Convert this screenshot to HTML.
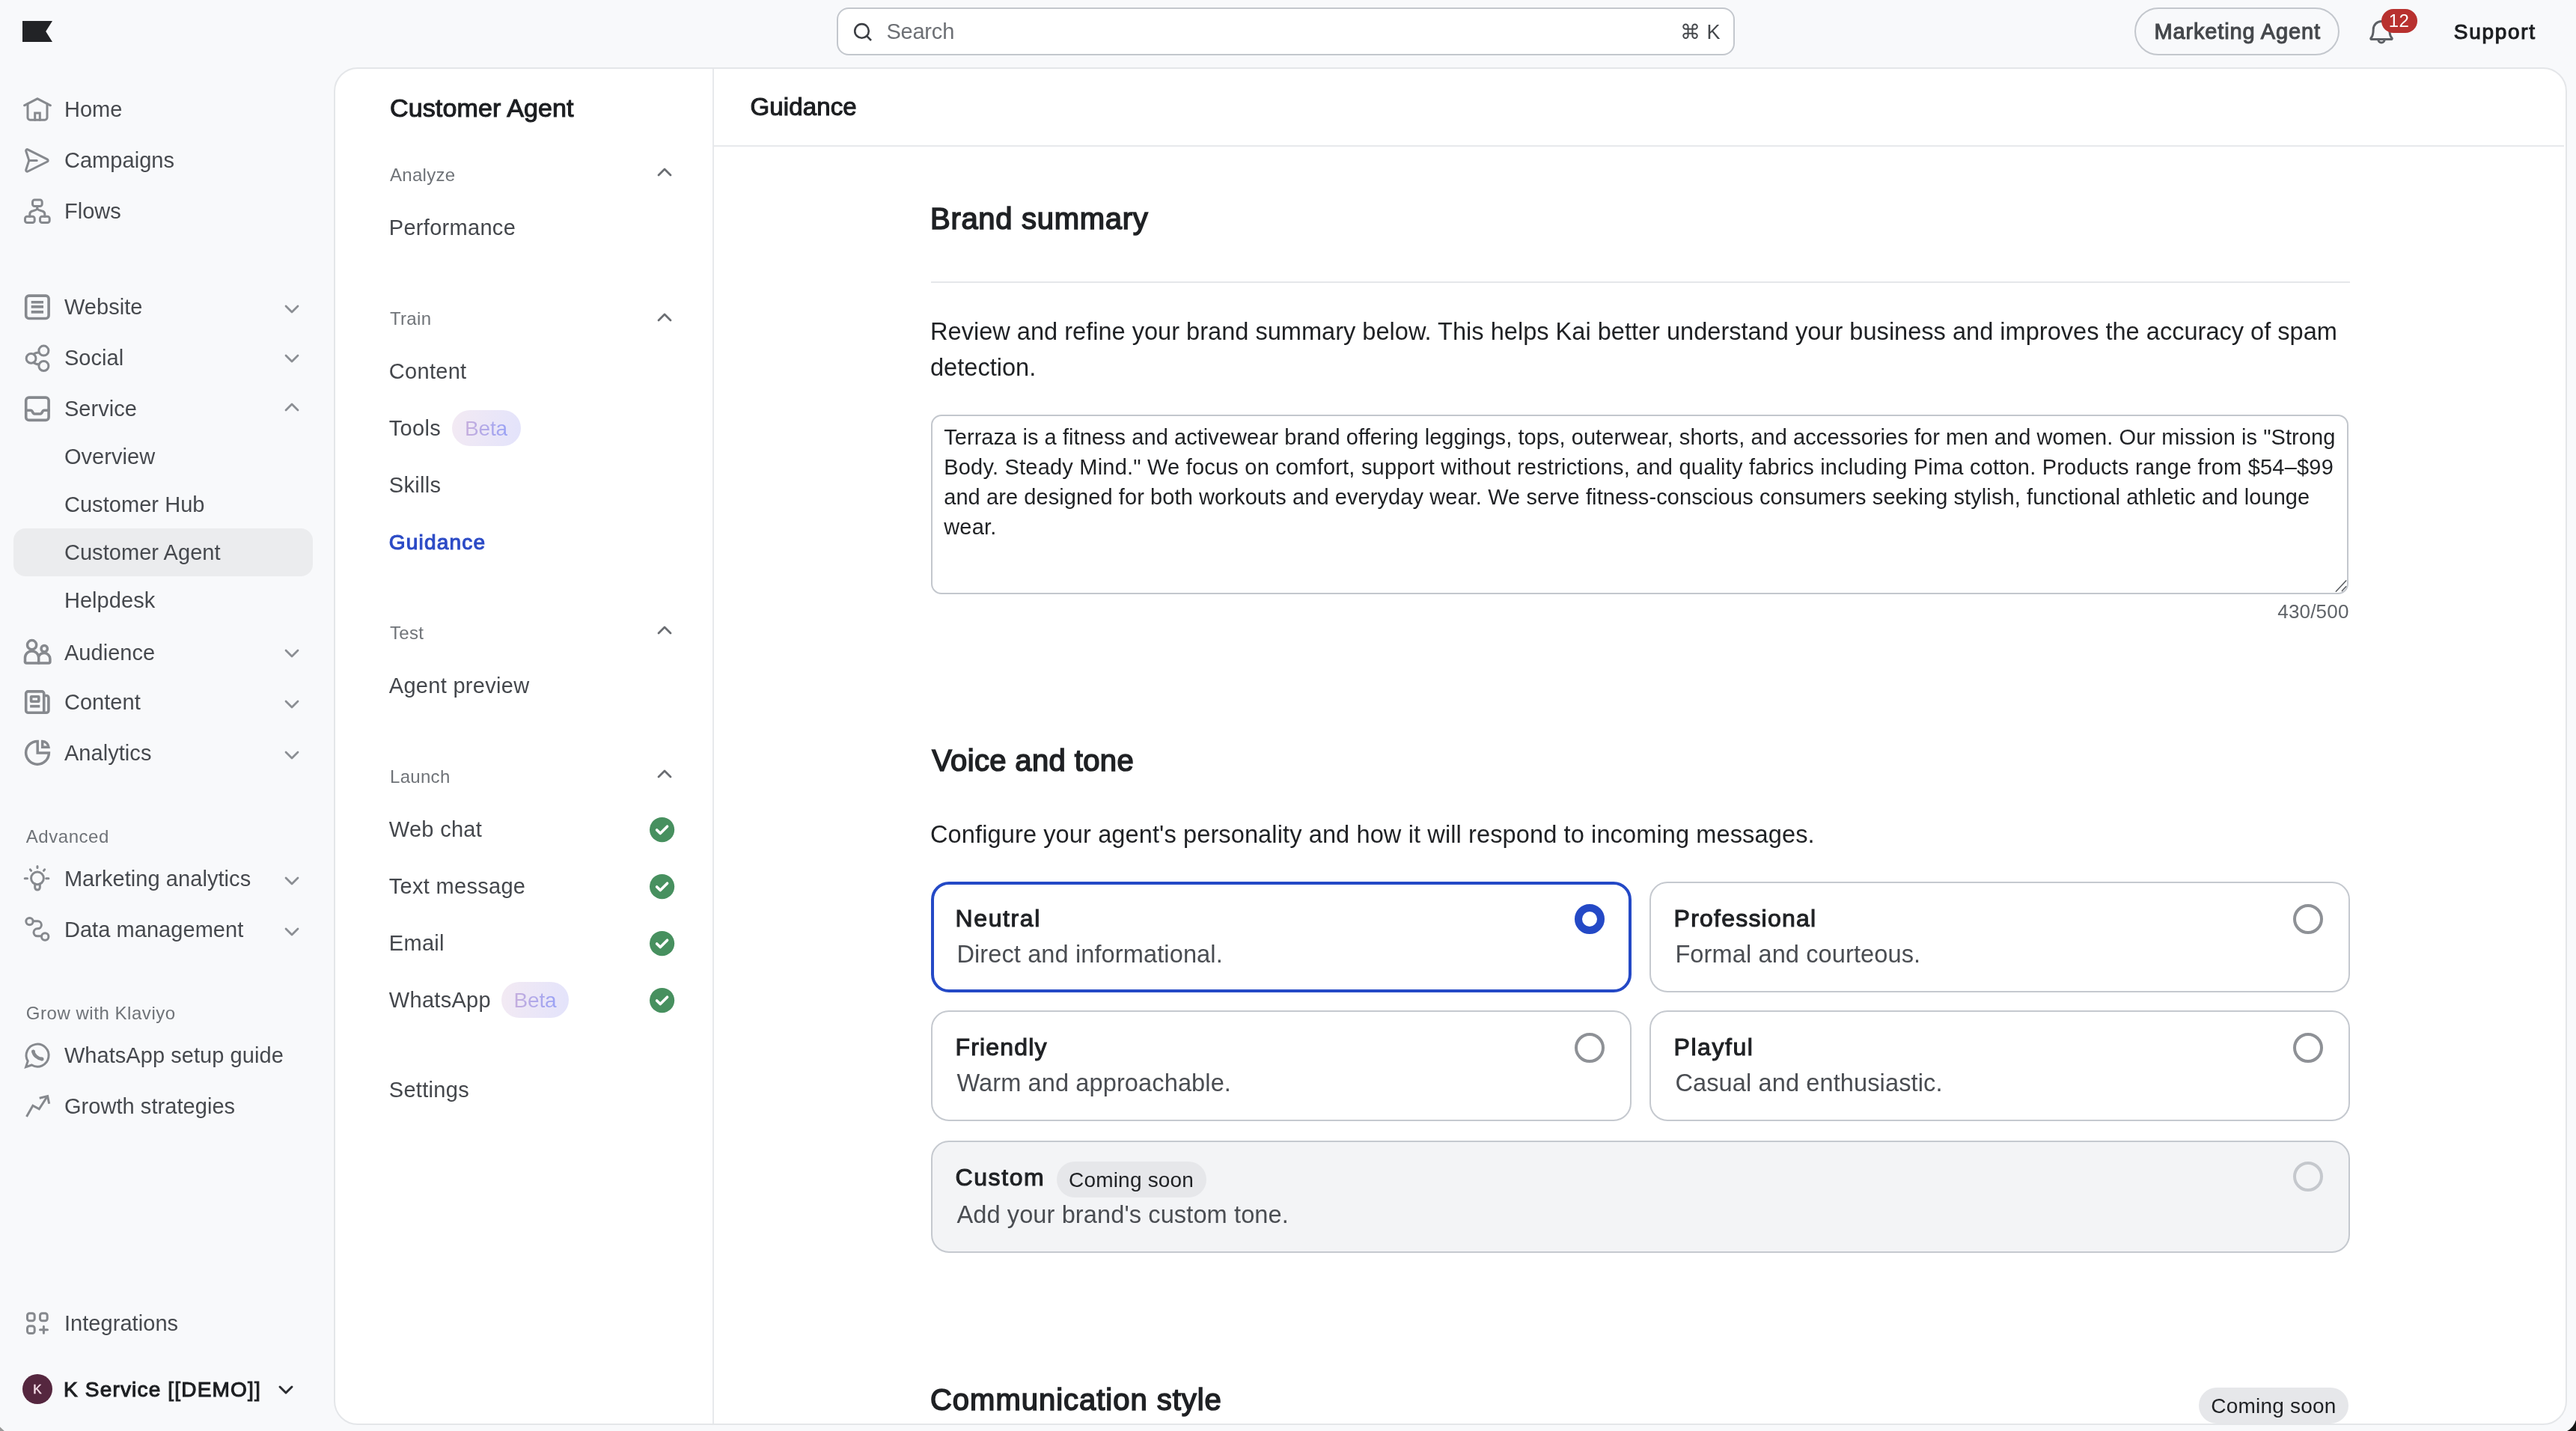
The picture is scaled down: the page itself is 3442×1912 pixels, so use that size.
<!DOCTYPE html>
<html><head><meta charset="utf-8"><title>Guidance</title>
<style>
html,body{margin:0;padding:0;width:3442px;height:1912px;overflow:hidden;background:#f8f9fb}
#root{position:absolute;left:0;top:0;width:1721px;height:956px;transform:scale(2);transform-origin:0 0;background:#f8f9fb;overflow:hidden;
  font-family:"Liberation Sans",sans-serif;}
.t{position:absolute;white-space:nowrap}
.ic{position:absolute;overflow:visible}
.beta{position:absolute;height:24px;border-radius:12px;background:linear-gradient(100deg,#f3eaf3,#e3e3fb);font-size:14px;line-height:24px;text-align:center;letter-spacing:-0.1px}
.beta span{background:linear-gradient(90deg,#c6aedd,#9aa2f5);-webkit-background-clip:text;background-clip:text;color:transparent}
.pill{position:absolute;height:24px;border-radius:12px;background:#e6e7ea;color:#1f2124;font-size:14px;line-height:24px;text-align:center;letter-spacing:0.1px}
</style></head>
<body><div id="root">
<svg class="ic" style="left:15px;top:14px;width:20px;height:14px" viewBox="0 0 20 14"><path d="M0 0 H20 L15.6 7 L20 14 H0 Z" fill="#222326"/></svg>
<div style="position:absolute;left:9px;top:353px;width:200px;height:32px;border-radius:8px;background:#ebecee"></div>
<svg class="ic" style="left:15px;top:63.099999999999994px;width:20px;height:20px" viewBox="0 0 20 20" fill="none" stroke="#86898e" stroke-width="1.5" stroke-linecap="round" stroke-linejoin="round"><path d="M1.3 7.4 L10 2.9 L18.7 7.4"/><path d="M3.5 6.3 V15.5 a1.6 1.6 0 0 0 1.6 1.6 H14.9 a1.6 1.6 0 0 0 1.6 -1.6 V6.3"/><path d="M8.35 17.1 V12.5 H11.65 V17.1" stroke-linejoin="miter"/></svg>
<div class="t" style="left:42.95px;top:63.28px;font-size:14.5px;line-height:20px;color:#46494e;font-weight:400;letter-spacing:0.03px;">Home</div>
<svg class="ic" style="left:15px;top:96.8px;width:20px;height:20px" viewBox="0 0 20 20" fill="none" stroke="#86898e" stroke-width="1.5" stroke-linecap="round" stroke-linejoin="round"><path d="M3.6 2.9 L16.6 9.4 a0.9 0.9 0 0 1 0 1.6 L3.6 17.5 a0.9 0.9 0 0 1 -1.25 -1.0 L4.4 10.2 L2.35 3.9 a0.9 0.9 0 0 1 1.25 -1.0 Z"/><path d="M4.4 10.2 H9.6"/></svg>
<div class="t" style="left:42.95px;top:96.98px;font-size:14.5px;line-height:20px;color:#46494e;font-weight:400;letter-spacing:0.03px;">Campaigns</div>
<svg class="ic" style="left:15px;top:130.8px;width:20px;height:20px" viewBox="0 0 20 20" fill="none" stroke="#86898e" stroke-width="1.5" stroke-linecap="round" stroke-linejoin="round"><rect x="6.75" y="2.55" width="6.35" height="4.2" rx="1.4"/><rect x="1.75" y="13.6" width="6.35" height="4.15" rx="1.4"/><rect x="11.75" y="13.6" width="6.35" height="4.15" rx="1.4"/><path d="M9.9 6.75 V8.3 C9.9 9.3 8.6 9.5 7 9.9 C5.6 10.2 4.9 10.9 4.9 12 V13.6"/><path d="M9.9 8.3 C9.9 9.3 11.2 9.5 12.8 9.9 C14.2 10.2 14.9 10.9 14.9 12 V13.6"/></svg>
<div class="t" style="left:42.95px;top:130.98px;font-size:14.5px;line-height:20px;color:#46494e;font-weight:400;letter-spacing:0.03px;">Flows</div>
<svg class="ic" style="left:15px;top:194.8px;width:20px;height:20px" viewBox="0 0 20 20" fill="none" stroke="#86898e" stroke-width="1.8" stroke-linecap="round" stroke-linejoin="round"><rect x="2.35" y="2.55" width="15.2" height="15.2" rx="2"/><path d="M5.85 6.85 H14 M5.85 9.95 H14 M5.85 13.45 H14" stroke-linecap="butt"/></svg>
<div class="t" style="left:42.95px;top:194.98px;font-size:14.5px;line-height:20px;color:#46494e;font-weight:400;letter-spacing:0.03px;">Website</div>
<svg class="ic" style="left:190px;top:201.5px;width:10px;height:10px" viewBox="0 0 10 10" fill="none" stroke="#8b8e93" stroke-width="1.4" stroke-linecap="round" stroke-linejoin="round"><path d="M1 2.5 L5 6.5 L9 2.5"/></svg>
<svg class="ic" style="left:15px;top:228.60000000000002px;width:20px;height:20px" viewBox="0 0 20 20" fill="none" stroke="#86898e" stroke-width="1.5" stroke-linecap="round" stroke-linejoin="round"><circle cx="14.2" cy="5.3" r="3.25"/><circle cx="5.78" cy="10.45" r="3.2"/><circle cx="14.2" cy="15.5" r="3.25"/><path d="M7.6 7.6 Q8.6 6.6 10.9 6.5 M7.6 13.3 Q8.6 14.3 10.9 14.4"/></svg>
<div class="t" style="left:42.95px;top:228.78px;font-size:14.5px;line-height:20px;color:#46494e;font-weight:400;letter-spacing:0.03px;">Social</div>
<svg class="ic" style="left:190px;top:235.3px;width:10px;height:10px" viewBox="0 0 10 10" fill="none" stroke="#8b8e93" stroke-width="1.4" stroke-linecap="round" stroke-linejoin="round"><path d="M1 2.5 L5 6.5 L9 2.5"/></svg>
<svg class="ic" style="left:15px;top:262.7px;width:20px;height:20px" viewBox="0 0 20 20" fill="none" stroke="#86898e" stroke-width="1.8" stroke-linecap="round" stroke-linejoin="round"><rect x="2.35" y="2.55" width="15.2" height="15.15" rx="2"/><path d="M2.35 11.1 H5.6 a0.8 0.8 0 0 1 0.7 0.4 L7.3 13.1 a0.8 0.8 0 0 0 0.7 0.4 H12 a0.8 0.8 0 0 0 0.7 -0.4 L13.7 11.5 a0.8 0.8 0 0 1 0.7 -0.4 H17.55"/></svg>
<div class="t" style="left:42.95px;top:262.88px;font-size:14.5px;line-height:20px;color:#46494e;font-weight:400;letter-spacing:0.03px;">Service</div>
<svg class="ic" style="left:190px;top:267.4px;width:10px;height:10px" viewBox="0 0 10 10" fill="none" stroke="#8b8e93" stroke-width="1.4" stroke-linecap="round" stroke-linejoin="round"><path d="M1 7 L5 3 L9 7"/></svg>
<div class="t" style="left:42.95px;top:295.38px;font-size:14.5px;line-height:20px;color:#46494e;font-weight:400;letter-spacing:0.03px;">Overview</div>
<div class="t" style="left:42.95px;top:327.28px;font-size:14.5px;line-height:20px;color:#46494e;font-weight:400;letter-spacing:0.03px;">Customer Hub</div>
<div class="t" style="left:42.95px;top:359.48px;font-size:14.5px;line-height:20px;color:#46494e;font-weight:400;letter-spacing:0.03px;">Customer Agent</div>
<div class="t" style="left:42.95px;top:391.38px;font-size:14.5px;line-height:20px;color:#46494e;font-weight:400;letter-spacing:0.03px;">Helpdesk</div>
<svg class="ic" style="left:15px;top:425.5px;width:20px;height:20px" viewBox="0 0 20 20" fill="none" stroke="#86898e" stroke-width="1.75" stroke-linecap="round" stroke-linejoin="round"><circle cx="6.3" cy="4.85" r="3.05"/><circle cx="14.6" cy="7.35" r="2.1"/><path d="M1.75 16.1 V13.5 A4.55 4.55 0 0 1 10.85 13.5 V17"/><path d="M10.85 12.4 C11.6 11.2 13 10.3 14.6 10.3 C16.8 10.3 18.45 12.1 18.45 14.2 V16 a1 1 0 0 1 -1 1 H2.75 a1 1 0 0 1 -1 -1"/></svg>
<div class="t" style="left:42.95px;top:425.68px;font-size:14.5px;line-height:20px;color:#46494e;font-weight:400;letter-spacing:0.03px;">Audience</div>
<svg class="ic" style="left:190px;top:432.2px;width:10px;height:10px" viewBox="0 0 10 10" fill="none" stroke="#8b8e93" stroke-width="1.4" stroke-linecap="round" stroke-linejoin="round"><path d="M1 2.5 L5 6.5 L9 2.5"/></svg>
<svg class="ic" style="left:15px;top:459.3px;width:20px;height:20px" viewBox="0 0 20 20" fill="none" stroke="#86898e" stroke-width="1.8" stroke-linecap="round" stroke-linejoin="round"><path d="M14.35 5.75 V4.3 a1.35 1.35 0 0 0 -1.35 -1.35 H3.7 a1.35 1.35 0 0 0 -1.35 1.35 V15.6 a1.55 1.55 0 0 0 1.55 1.55 H15.9 a1.55 1.55 0 0 0 1.55 -1.55 V7.1 a1.35 1.35 0 0 0 -1.35 -1.35 H14.35 V17.15"/><rect x="5.8" y="6.35" width="5.1" height="3.25" rx="0.2" stroke-linejoin="miter"/><path d="M5.06 12.85 H11.65" stroke-linecap="butt"/></svg>
<div class="t" style="left:42.95px;top:459.48px;font-size:14.5px;line-height:20px;color:#46494e;font-weight:400;letter-spacing:0.03px;">Content</div>
<svg class="ic" style="left:190px;top:466.0px;width:10px;height:10px" viewBox="0 0 10 10" fill="none" stroke="#8b8e93" stroke-width="1.4" stroke-linecap="round" stroke-linejoin="round"><path d="M1 2.5 L5 6.5 L9 2.5"/></svg>
<svg class="ic" style="left:15px;top:493.3px;width:20px;height:20px" viewBox="0 0 20 20" fill="none" stroke="#86898e" stroke-width="1.75" stroke-linecap="round" stroke-linejoin="round"><path d="M10.1 2.2 A7.7 7.7 0 1 0 17.7 10 H10.1 Z" stroke-linejoin="miter"/><path d="M13.35 2.25 V6.1 H17.45 A4.4 4.4 0 0 0 13.35 2.25 Z" stroke-linejoin="miter"/></svg>
<div class="t" style="left:42.95px;top:493.48px;font-size:14.5px;line-height:20px;color:#46494e;font-weight:400;letter-spacing:0.03px;">Analytics</div>
<svg class="ic" style="left:190px;top:500.0px;width:10px;height:10px" viewBox="0 0 10 10" fill="none" stroke="#8b8e93" stroke-width="1.4" stroke-linecap="round" stroke-linejoin="round"><path d="M1 2.5 L5 6.5 L9 2.5"/></svg>
<div class="t" style="left:17.4px;top:551.14px;font-size:12px;line-height:16px;color:#6f7378;font-weight:400;letter-spacing:0.27px;">Advanced</div>
<svg class="ic" style="left:15px;top:577.0999999999999px;width:20px;height:20px" viewBox="0 0 20 20" fill="none" stroke="#86898e" stroke-width="1.5" stroke-linecap="round" stroke-linejoin="round"><circle cx="9.98" cy="9.7" r="4.2"/><path d="M8.35 13.4 V15.9 a1.65 1.65 0 0 0 3.3 0 V13.4"/><path d="M9.98 1.75 V2.8 M5.2 3.9 L5.8 4.7 M14.8 3.9 L14.2 4.7 M1.6 9.85 H3.25 M15.85 9.85 H17.45"/></svg>
<div class="t" style="left:42.95px;top:577.28px;font-size:14.5px;line-height:20px;color:#46494e;font-weight:400;letter-spacing:0.03px;">Marketing analytics</div>
<svg class="ic" style="left:190px;top:583.8px;width:10px;height:10px" viewBox="0 0 10 10" fill="none" stroke="#8b8e93" stroke-width="1.4" stroke-linecap="round" stroke-linejoin="round"><path d="M1 2.5 L5 6.5 L9 2.5"/></svg>
<svg class="ic" style="left:15px;top:611.1999999999999px;width:20px;height:20px" viewBox="0 0 20 20" fill="none" stroke="#86898e" stroke-width="1.5" stroke-linecap="round" stroke-linejoin="round"><circle cx="4.75" cy="4.55" r="2.35"/><circle cx="15.1" cy="14.75" r="2.35"/><path d="M7.1 4.4 H10.2 A2.5 2.5 0 0 1 10.2 9.4 H10 A2.5 2.5 0 0 0 10 14.4 H12.75"/></svg>
<div class="t" style="left:42.95px;top:611.38px;font-size:14.5px;line-height:20px;color:#46494e;font-weight:400;letter-spacing:0.03px;">Data management</div>
<svg class="ic" style="left:190px;top:617.9px;width:10px;height:10px" viewBox="0 0 10 10" fill="none" stroke="#8b8e93" stroke-width="1.4" stroke-linecap="round" stroke-linejoin="round"><path d="M1 2.5 L5 6.5 L9 2.5"/></svg>
<div class="t" style="left:17.4px;top:669.44px;font-size:12px;line-height:16px;color:#6f7378;font-weight:400;letter-spacing:0.27px;">Grow with Klaviyo</div>
<svg class="ic" style="left:15px;top:694.8px;width:20px;height:20px" viewBox="0 0 20 20" fill="none" stroke="#86898e" stroke-width="1.5" stroke-linecap="round" stroke-linejoin="round"><path d="M2.3 17.8 L3.6 13.9 A7.5 7.5 0 1 1 6.2 16.5 Z" stroke-linejoin="miter"/><path d="M7.2 7.4 C7.4 9.8 9.9 12.2 12.9 12.5" stroke-width="2.2"/><circle cx="7.25" cy="7.55" r="1.2" fill="#86898e" stroke="none"/><circle cx="13" cy="12.45" r="1.25" fill="#86898e" stroke="none"/></svg>
<div class="t" style="left:42.95px;top:694.98px;font-size:14.5px;line-height:20px;color:#46494e;font-weight:400;letter-spacing:0.03px;">WhatsApp setup guide</div>
<svg class="ic" style="left:15px;top:728.8px;width:20px;height:20px" viewBox="0 0 20 20" fill="none" stroke="#86898e" stroke-width="1.5" stroke-linecap="round" stroke-linejoin="round"><path d="M2.75 16.95 L6.95 9.6 L11.15 11.9 L16.5 3.6" stroke-linecap="butt" stroke-linejoin="miter"/><path d="M11.35 4.6 L16.8 3.3 L17.85 8.35" stroke-linecap="butt" stroke-linejoin="miter"/></svg>
<div class="t" style="left:42.95px;top:728.98px;font-size:14.5px;line-height:20px;color:#46494e;font-weight:400;letter-spacing:0.03px;">Growth strategies</div>
<svg class="ic" style="left:15px;top:873.8px;width:20px;height:20px" viewBox="0 0 20 20" fill="none" stroke="#86898e" stroke-width="1.5" stroke-linecap="round" stroke-linejoin="round"><rect x="3.25" y="3.4" width="4.85" height="5" rx="1.5"/><rect x="11.75" y="3.4" width="4.85" height="5" rx="1.5"/><rect x="3.25" y="11.85" width="4.85" height="4.95" rx="1.5"/><path d="M14.2 12.1 V16.6 M11.75 14.35 H16.75"/></svg>
<div class="t" style="left:42.95px;top:873.98px;font-size:14.5px;line-height:20px;color:#46494e;font-weight:400;letter-spacing:0.03px;">Integrations</div>
<div style="position:absolute;left:15px;top:918px;width:20px;height:20px;border-radius:50%;background:#55273f;color:#f3dbe6;font-size:8.5px;line-height:20.5px;text-align:center;-webkit-text-stroke:0.2px #f3dbe6">K</div>
<div class="t" style="left:42.5px;top:918.35px;font-size:14px;line-height:20px;color:#1c1e21;font-weight:400;letter-spacing:0.588px;-webkit-text-stroke:0.55px #1c1e21;">K Service [[DEMO]]</div>
<svg class="ic" style="left:185.5px;top:924px;width:10px;height:10px" viewBox="0 0 10 10" fill="none" stroke="#2a2c30" stroke-width="1.5" stroke-linecap="round" stroke-linejoin="round"><path d="M1 2.5 L5 6.5 L9 2.5"/></svg>
<div style="position:absolute;left:559.3px;top:5.3px;width:599.4px;height:31.3px;box-sizing:border-box;border:1px solid #c3c7cd;border-radius:8px;background:#fff"></div>
<svg class="ic" style="left:569.5px;top:14.5px;width:13px;height:13px" viewBox="0 0 13 13" fill="none" stroke="#3c3f44" stroke-width="1.3" stroke-linecap="round" stroke-linejoin="round"><circle cx="5.75" cy="5.7" r="4.65"/><path d="M9.1 9.1 L12 12" stroke-linecap="butt"/></svg>
<div class="t" style="left:592.2px;top:11.43px;font-size:14.5px;line-height:20px;color:#6d7075;font-weight:400;letter-spacing:-0.1px;">Search</div>
<div class="t" style="right:571.7px;top:11.92px;font-size:13.5px;line-height:20px;color:#45484c;font-weight:400;letter-spacing:0px;">&#8984; K</div>
<div style="position:absolute;left:1425.8px;top:5.2px;width:136.8px;height:31.6px;box-sizing:border-box;border:1px solid #c3c7cd;border-radius:16px"></div>
<div class="t" style="left:1439.2px;top:10.88px;font-size:14.5px;line-height:20px;color:#45484c;font-weight:400;letter-spacing:0.429px;-webkit-text-stroke:0.55px #45484c;">Marketing Agent</div>
<svg class="ic" style="left:1582px;top:12px;width:18px;height:18px" viewBox="0 0 18 18" fill="none" stroke="#5d6065" stroke-width="1.5" stroke-linecap="round" stroke-linejoin="round"><path d="M2 13.4 C3.4 12 3.6 10.6 3.6 7.6 A5.4 5.4 0 0 1 14.4 7.6 C14.4 10.6 14.6 12 16 13.4 a0.5 0.5 0 0 1 -0.35 0.85 H2.35 a0.5 0.5 0 0 1 -0.35 -0.85 Z"/><path d="M6.9 14.4 a2.1 2.1 0 0 0 4.2 0"/></svg>
<div style="position:absolute;left:1591px;top:6px;width:23.6px;height:16px;border-radius:8px;background:#b8312f;color:#fff;font-size:12px;line-height:16px;text-align:center;letter-spacing:0.3px">12</div>
<div class="t" style="left:1639.4px;top:11.45px;font-size:14px;line-height:20px;color:#1c1e21;font-weight:400;letter-spacing:0.849px;-webkit-text-stroke:0.55px #1c1e21;">Support</div>
<div style="position:absolute;left:223px;top:45px;width:1491.5px;height:906.5px;box-sizing:border-box;border:1px solid #e4e6e9;border-radius:16px;background:#fff;overflow:hidden" id="card"></div>
<div style="position:absolute;left:476px;top:46px;width:1px;height:905px;background:#e7e9ec"></div>
<div style="position:absolute;left:477px;top:97px;width:1236px;height:1px;background:#e7e9ec"></div>
<div class="t" style="left:260.5px;top:60.81px;font-size:17px;line-height:24px;color:#1c1e21;font-weight:400;letter-spacing:0.066px;-webkit-text-stroke:0.55px #1c1e21;">Customer Agent</div>
<div class="t" style="left:260.5px;top:108.84px;font-size:12px;line-height:16px;color:#6f7378;font-weight:400;letter-spacing:0.15px;">Analyze</div>
<svg class="ic" style="left:439px;top:110.4px;width:10px;height:10px" viewBox="0 0 10 10" fill="none" stroke="#6a6d72" stroke-width="1.4" stroke-linecap="round" stroke-linejoin="round"><path d="M1 7 L5 3 L9 7"/></svg>
<div class="t" style="left:259.9px;top:142.18px;font-size:14.5px;line-height:20px;color:#44474c;font-weight:400;letter-spacing:0.15px;">Performance</div>
<div class="t" style="left:260.5px;top:204.94px;font-size:12px;line-height:16px;color:#6f7378;font-weight:400;letter-spacing:0.15px;">Train</div>
<svg class="ic" style="left:439px;top:206.5px;width:10px;height:10px" viewBox="0 0 10 10" fill="none" stroke="#6a6d72" stroke-width="1.4" stroke-linecap="round" stroke-linejoin="round"><path d="M1 7 L5 3 L9 7"/></svg>
<div class="t" style="left:259.9px;top:238.48px;font-size:14.5px;line-height:20px;color:#44474c;font-weight:400;letter-spacing:0.15px;">Content</div>
<div class="t" style="left:259.9px;top:276.38px;font-size:14.5px;line-height:20px;color:#44474c;font-weight:400;letter-spacing:0.15px;">Tools</div>
<div class="beta" style="left:302px;top:274px;width:45.5px;"><span>Beta</span></div>
<div class="t" style="left:259.9px;top:313.98px;font-size:14.5px;line-height:20px;color:#44474c;font-weight:400;letter-spacing:0.15px;">Skills</div>
<div class="t" style="left:259.9px;top:352.35px;font-size:14px;line-height:20px;color:#2c4bc6;font-weight:400;letter-spacing:0.6px;-webkit-text-stroke:0.55px #2c4bc6;">Guidance</div>
<div class="t" style="left:260.5px;top:414.74px;font-size:12px;line-height:16px;color:#6f7378;font-weight:400;letter-spacing:0.15px;">Test</div>
<svg class="ic" style="left:439px;top:416.4px;width:10px;height:10px" viewBox="0 0 10 10" fill="none" stroke="#6a6d72" stroke-width="1.4" stroke-linecap="round" stroke-linejoin="round"><path d="M1 7 L5 3 L9 7"/></svg>
<div class="t" style="left:259.9px;top:448.28px;font-size:14.5px;line-height:20px;color:#44474c;font-weight:400;letter-spacing:0.15px;">Agent preview</div>
<div class="t" style="left:260.5px;top:510.74px;font-size:12px;line-height:16px;color:#6f7378;font-weight:400;letter-spacing:0.15px;">Launch</div>
<svg class="ic" style="left:439px;top:512.4px;width:10px;height:10px" viewBox="0 0 10 10" fill="none" stroke="#6a6d72" stroke-width="1.4" stroke-linecap="round" stroke-linejoin="round"><path d="M1 7 L5 3 L9 7"/></svg>
<div class="t" style="left:259.9px;top:544.28px;font-size:14.5px;line-height:20px;color:#44474c;font-weight:400;letter-spacing:0.15px;">Web chat</div>
<svg class="ic" style="left:433.6px;top:545.90px;width:16.6px;height:16.6px" viewBox="0 0 20 20"><circle cx="10" cy="10" r="10" fill="#47905f"/><path d="M5.8 10.2 L8.6 13 L14.2 7.4" stroke="#fff" stroke-width="2.2" fill="none" stroke-linecap="round" stroke-linejoin="round"/></svg>
<div class="t" style="left:259.9px;top:581.98px;font-size:14.5px;line-height:20px;color:#44474c;font-weight:400;letter-spacing:0.15px;">Text message</div>
<svg class="ic" style="left:433.6px;top:583.60px;width:16.6px;height:16.6px" viewBox="0 0 20 20"><circle cx="10" cy="10" r="10" fill="#47905f"/><path d="M5.8 10.2 L8.6 13 L14.2 7.4" stroke="#fff" stroke-width="2.2" fill="none" stroke-linecap="round" stroke-linejoin="round"/></svg>
<div class="t" style="left:259.9px;top:620.28px;font-size:14.5px;line-height:20px;color:#44474c;font-weight:400;letter-spacing:0.15px;">Email</div>
<svg class="ic" style="left:433.6px;top:621.90px;width:16.6px;height:16.6px" viewBox="0 0 20 20"><circle cx="10" cy="10" r="10" fill="#47905f"/><path d="M5.8 10.2 L8.6 13 L14.2 7.4" stroke="#fff" stroke-width="2.2" fill="none" stroke-linecap="round" stroke-linejoin="round"/></svg>
<div class="t" style="left:259.9px;top:658.38px;font-size:14.5px;line-height:20px;color:#44474c;font-weight:400;letter-spacing:0.15px;">WhatsApp</div>
<svg class="ic" style="left:433.6px;top:660.00px;width:16.6px;height:16.6px" viewBox="0 0 20 20"><circle cx="10" cy="10" r="10" fill="#47905f"/><path d="M5.8 10.2 L8.6 13 L14.2 7.4" stroke="#fff" stroke-width="2.2" fill="none" stroke-linecap="round" stroke-linejoin="round"/></svg>
<div class="beta" style="left:335px;top:656px;width:45px;"><span>Beta</span></div>
<div class="t" style="left:259.9px;top:718.38px;font-size:14.5px;line-height:20px;color:#44474c;font-weight:400;letter-spacing:0.15px;">Settings</div>
<div class="t" style="left:501.3px;top:59.48px;font-size:16.5px;line-height:24px;color:#1c1e21;font-weight:400;letter-spacing:0.056px;-webkit-text-stroke:0.55px #1c1e21;">Guidance</div>
<div class="t" style="left:621.5px;top:132.17px;font-size:20px;line-height:28px;color:#1f2124;font-weight:400;letter-spacing:0.348px;-webkit-text-stroke:0.8px #1f2124;">Brand summary</div>
<div style="position:absolute;left:621.5px;top:188px;width:948px;height:1px;background:#e5e7ea"></div>
<div class="t" style="left:621.5px;top:208.75px;font-size:16.3px;line-height:24px;color:#1f2124;font-weight:400;letter-spacing:0px;">Review and refine your brand summary below. This helps Kai better understand your business and improves the accuracy of spam</div>
<div class="t" style="left:621.5px;top:232.65px;font-size:16.3px;line-height:24px;color:#1f2124;font-weight:400;letter-spacing:0px;">detection.</div>
<div style="position:absolute;left:621.5px;top:277.3px;width:947.6px;height:119.9px;box-sizing:border-box;border:1px solid #c3c7cd;border-radius:7px;background:#fff"></div>
<div class="t" style="left:630.6px;top:282.08px;font-size:14.5px;line-height:20px;color:#1f2124;font-weight:400;letter-spacing:0.03px;">Terraza is a fitness and activewear brand offering leggings, tops, outerwear, shorts, and accessories for men and women. Our mission is "Strong</div>
<div class="t" style="left:630.6px;top:302.08px;font-size:14.5px;line-height:20px;color:#1f2124;font-weight:400;letter-spacing:0.104px;">Body. Steady Mind." We focus on comfort, support without restrictions, and quality fabrics including Pima cotton. Products range from $54&ndash;$99</div>
<div class="t" style="left:630.6px;top:322.08px;font-size:14.5px;line-height:20px;color:#1f2124;font-weight:400;letter-spacing:0.044px;">and are designed for both workouts and everyday wear. We serve fitness-conscious consumers seeking stylish, functional athletic and lounge</div>
<div class="t" style="left:630.6px;top:342.08px;font-size:14.5px;line-height:20px;color:#1f2124;font-weight:400;letter-spacing:0.1px;">wear.</div>
<svg class="ic" style="left:1556px;top:383px;width:10px;height:10px" viewBox="0 0 10 10" stroke="#56595e" stroke-width="0.75" stroke-linecap="round" fill="none"><path d="M4.65 12.1 L11.35 4.95 M8.7 11.8 L11.35 8.9"/></svg>
<div class="t" style="right:151.70000000000005px;top:401.10px;font-size:13px;line-height:16px;color:#5f6368;font-weight:400;letter-spacing:0.1px;">430/500</div>
<div class="t" style="left:622.6px;top:493.97px;font-size:20px;line-height:28px;color:#1f2124;font-weight:400;letter-spacing:0.184px;-webkit-text-stroke:0.8px #1f2124;">Voice and tone</div>
<div class="t" style="left:621.5px;top:544.75px;font-size:16.3px;line-height:24px;color:#1f2124;font-weight:400;letter-spacing:0.05px;">Configure your agent's personality and how it will respond to incoming messages.</div>
<div style="position:absolute;left:621.5px;top:589px;width:468px;height:74px;box-sizing:border-box;border:2px solid #2449c6;border-radius:12px;background:#fff"></div>
<div class="t" style="left:638.3px;top:602.36px;font-size:16px;line-height:24px;color:#1f2124;font-weight:400;letter-spacing:0.801px;-webkit-text-stroke:0.55px #1f2124;">Neutral</div>
<div class="t" style="left:639.2px;top:625.45px;font-size:16.3px;line-height:24px;color:#4a4d52;font-weight:400;letter-spacing:0.05px;">Direct and informational.</div>
<svg class="ic" style="left:1052.45px;top:603.95px;width:20px;height:20px" viewBox="0 0 20 20"><circle cx="10" cy="10" r="7.5" stroke="#2449c6" stroke-width="5" fill="#fff"/></svg>
<div style="position:absolute;left:1101.5px;top:589px;width:468px;height:74px;box-sizing:border-box;border:1px solid #c5c9cf;border-radius:12px;background:#fff"></div>
<div class="t" style="left:1118.3px;top:602.36px;font-size:16px;line-height:24px;color:#1f2124;font-weight:400;letter-spacing:0.609px;-webkit-text-stroke:0.55px #1f2124;">Professional</div>
<div class="t" style="left:1119.2px;top:625.45px;font-size:16.3px;line-height:24px;color:#4a4d52;font-weight:400;letter-spacing:0.05px;">Formal and courteous.</div>
<svg class="ic" style="left:1532.45px;top:603.95px;width:20px;height:20px" viewBox="0 0 20 20"><circle cx="10" cy="10" r="9" stroke="#8e9196" stroke-width="2" fill="none"/></svg>
<div style="position:absolute;left:621.5px;top:675px;width:468px;height:74px;box-sizing:border-box;border:1px solid #c5c9cf;border-radius:12px;background:#fff"></div>
<div class="t" style="left:638.3px;top:688.46px;font-size:16px;line-height:24px;color:#1f2124;font-weight:400;letter-spacing:0.571px;-webkit-text-stroke:0.55px #1f2124;">Friendly</div>
<div class="t" style="left:639.2px;top:711.25px;font-size:16.3px;line-height:24px;color:#4a4d52;font-weight:400;letter-spacing:0.05px;">Warm and approachable.</div>
<svg class="ic" style="left:1052.45px;top:689.95px;width:20px;height:20px" viewBox="0 0 20 20"><circle cx="10" cy="10" r="9" stroke="#8e9196" stroke-width="2" fill="none"/></svg>
<div style="position:absolute;left:1101.5px;top:675px;width:468px;height:74px;box-sizing:border-box;border:1px solid #c5c9cf;border-radius:12px;background:#fff"></div>
<div class="t" style="left:1118.3px;top:688.46px;font-size:16px;line-height:24px;color:#1f2124;font-weight:400;letter-spacing:0.768px;-webkit-text-stroke:0.55px #1f2124;">Playful</div>
<div class="t" style="left:1119.2px;top:711.25px;font-size:16.3px;line-height:24px;color:#4a4d52;font-weight:400;letter-spacing:0.05px;">Casual and enthusiastic.</div>
<svg class="ic" style="left:1532.45px;top:689.95px;width:20px;height:20px" viewBox="0 0 20 20"><circle cx="10" cy="10" r="9" stroke="#8e9196" stroke-width="2" fill="none"/></svg>
<div style="position:absolute;left:621.5px;top:761.5px;width:948px;height:75px;box-sizing:border-box;border:1px solid #c5c9cf;border-radius:12px;background:#f3f4f6"></div>
<div class="t" style="left:638.3px;top:774.76px;font-size:16px;line-height:24px;color:#1f2124;font-weight:400;letter-spacing:0.78px;-webkit-text-stroke:0.55px #1f2124;">Custom</div>
<div class="t" style="left:639.2px;top:798.65px;font-size:16.3px;line-height:24px;color:#4a4d52;font-weight:400;letter-spacing:0.05px;">Add your brand's custom tone.</div>
<svg class="ic" style="left:1532.45px;top:776.45px;width:20px;height:20px" viewBox="0 0 20 20"><circle cx="10" cy="10" r="9" stroke="#c5c8cd" stroke-width="2" fill="none"/></svg>
<div class="pill" style="left:705.6px;top:775.5px;width:100.4px">Coming soon</div>
<div class="t" style="left:621.5px;top:921.07px;font-size:20px;line-height:28px;color:#1f2124;font-weight:400;letter-spacing:0.489px;-webkit-text-stroke:0.8px #1f2124;">Communication style</div>
<div class="pill" style="left:1468.6px;top:926.5px;width:100.7px">Coming soon</div>
<svg class="ic" style="left:0;top:0;width:1721px;height:956px" viewBox="0 0 1721 956"><path d="M1721 948.65 Q1719.2 954 1715.05 956 L1721 956 Z" fill="#141414"/><path d="M0 953.3 L2.9 956 L0 956 Z" fill="#9a9a9a"/></svg>
</div></body></html>
